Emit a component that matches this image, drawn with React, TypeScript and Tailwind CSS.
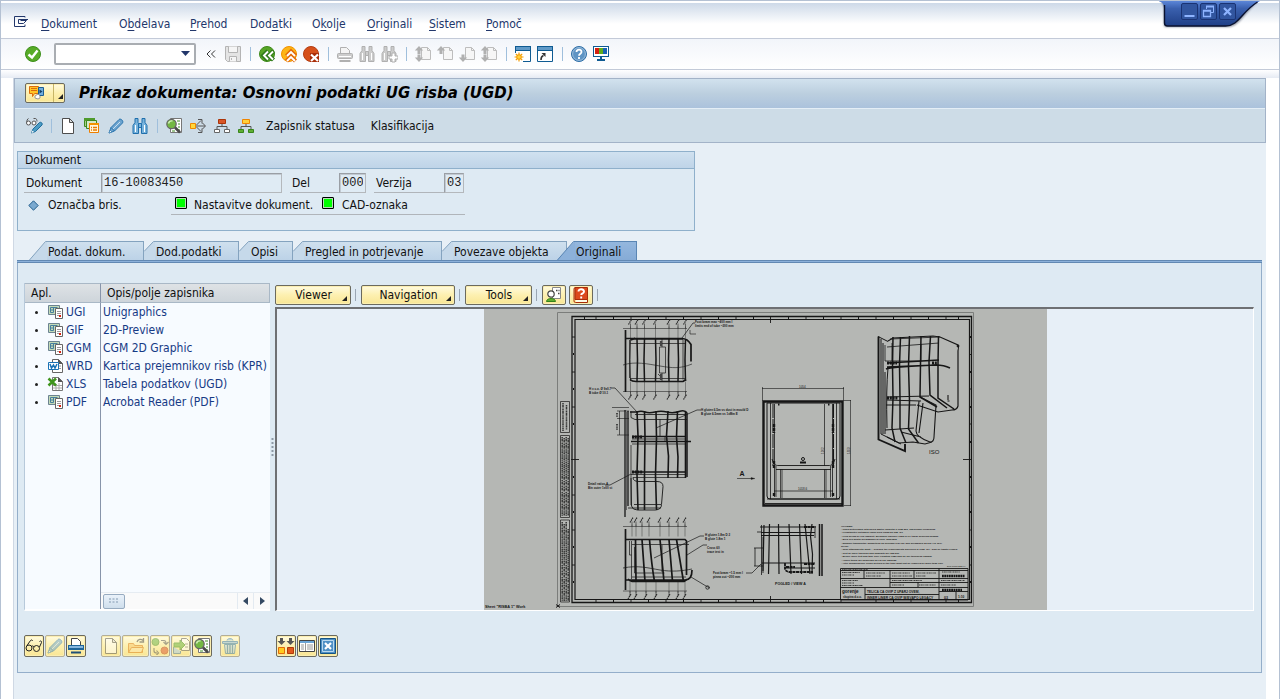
import React from "react";

type IconProps = { children: React.ReactNode; w?: number; h?: number; faded?: boolean };

function Icon({ children, w = 18, h = 18, faded = false }: IconProps) {
  return (
    <svg
      width={w}
      height={h}
      viewBox={`0 0 ${w} ${h}`}
      fill="none"
      aria-hidden="true"
      className={faded ? "shrink-0 opacity-50" : "shrink-0"}
    >
      {children}
    </svg>
  );
}

/* ---------- icons ---------- */

const CheckIcon = () => (
  <Icon>
    <circle cx="9" cy="9" r="7.5" fill="#57ab27" stroke="#3d8f1b" />
    <path d="M4.5 9.5 8 12.5 13.5 5.5" stroke="#fff" strokeWidth="2.4" />
  </Icon>
);

const SaveIcon = () => (
  <Icon>
    <path d="M1.5 1.5h15v15h-13l-2-2z" fill="#e4e4e4" stroke="#b4b4b4" />
    <path d="M4.5 1.5v6h9v-6" fill="#f5f5f5" stroke="#b4b4b4" />
    <path d="M5.500 16.500v-5h7v5" fill="#f5f5f5" stroke="#b4b4b4" />
    <path d="M7.500 13v2" stroke="#b4b4b4" />
  </Icon>
);

const BackIcon = () => (
  <Icon>
    <circle cx="9" cy="9" r="7.500" fill="#57a526" stroke="#3f8a1b" />
    <path d="M10 6 5.500 10.500 10 15M15.500 6 11 10.500 15.500 15" stroke="#2f7a1b" strokeWidth="4.400" />
    <path d="M10 6.500 6 10.500 10 14.500M15 6.500 11 10.500 15 14.500" stroke="#fff" strokeWidth="1.900" />
  </Icon>
);

const ExitIcon = () => (
  <Icon>
    <circle cx="9" cy="9" r="7.500" fill="#fdb515" stroke="#f29100" />
    <path d="M6.500 11 11 6.500 15.500 11M6.500 16 11 11.500 15.500 16" stroke="#e36a0a" strokeWidth="4.200" />
    <path d="M7 11 11 7 15 11M7 16 11 12 15 16" stroke="#fff" strokeWidth="1.900" />
  </Icon>
);

const CancelIcon = () => (
  <Icon>
    <circle cx="9" cy="9" r="7.500" fill="#d6501a" stroke="#b43c10" />
    <path d="M8 8h9v9H8z" fill="#a92d07" />
    <path d="m9 9.500 7 6.500m0-6.500L9 16" stroke="#fff" strokeWidth="2.200" />
  </Icon>
);

const PrintIcon = () => (
  <Icon>
    <path d="M4.500 8V2.500h6l3 3V8" fill="#f4f4f4" stroke="#b0b0b0" />
    <rect x="1.500" y="8.500" width="15" height="5" rx="1" fill="#ccc" stroke="#b0b0b0" />
    <path d="M3 11.500h12" stroke="#fff" />
    <path d="M3.500 16h11" stroke="#b0b0b0" strokeWidth="2" />
  </Icon>
);

function Binoculars({ fill, stroke }: { fill: string; stroke: string }) {
  return (
    <g fill={fill} stroke={stroke}>
      <path d="M4 1.500h3v4l.5 1v10h-5.500v-8l2-3z" />
      <path d="M11 1.500h3v4l2 3v8h-5.500v-10l.5-1z" />
      <path d="M7.500 6.500h3v4h-3z" />
      <path d="M4.500 8v7M13.500 8v7" stroke="#fff" />
    </g>
  );
}

const FindIcon = () => (
  <Icon>
    <Binoculars fill="#ccc" stroke="#b0b0b0" />
  </Icon>
);

const FindNextIcon = () => (
  <Icon>
    <Binoculars fill="#ccc" stroke="#b0b0b0" />
    <path d="M12 8h3v3h3v3h-3v3h-3v-3H9v-3h3z" fill="#fff" stroke="#b0b0b0" />
  </Icon>
);

function PageNavIcon({ up = false, down = false }: { up?: boolean; down?: boolean }) {
  return (
    <Icon>
      <path d="M7.500 2.500h6l3 3v9h-9z" fill="#f6f6f6" stroke="#bdbdbd" />
      <path d="M13.500 2.500v3h3" stroke="#bdbdbd" />
      {up && <path d="M5 1 .8 5.500H3.500V9h3V5.500h2.700z" fill="#b0b0b0" />}
      {down && <path d="M5 17 .8 12.500H3.500V9.500h3v3h2.700z" fill="#b0b0b0" />}
    </Icon>
  );
}

const NewSessionIcon = () => (
  <Icon>
    <path d="M1.500 1.500h15v15h-15z" fill="#fff" stroke="#0f5b92" />
    <path d="M1 1h16v5H1z" fill="#0f5b92" />
    <path d="M2 2h14v3H2z" fill="#5f9ac8" />
    <path d="M0 8h9v10H0z" fill="#fff" />
    <circle cx="5" cy="12" r="2.800" fill="#fbb212" />
    <path d="M5 7.500v9M.5 12h9M1.800 8.800l6.400 6.400M8.200 8.800l-6.400 6.400" stroke="#f39a00" strokeWidth="1.200" />
    <circle cx="5" cy="12" r="1.800" fill="#ffd23f" />
  </Icon>
);

const ShortcutIcon = () => (
  <Icon>
    <path d="M1.500 1.500h15v15h-15z" fill="#fff" stroke="#0f5b92" />
    <path d="M1 1h16v5H1z" fill="#0f5b92" />
    <path d="M2 2h14v3H2z" fill="#5f9ac8" />
    <path d="M5 15c0-3 1-4 2.500-4.500" stroke="#333" strokeWidth="1.600" />
    <path d="M5.500 8h4v4z" fill="#333" />
  </Icon>
);

const HelpIcon = () => (
  <Icon>
    <circle cx="9" cy="9" r="7.500" fill="#5e94c4" stroke="#2e6ea6" />
    <circle cx="9" cy="9" r="6.400" stroke="#a9c8e2" strokeWidth=".8" />
    <path d="M6.500 7c0-3.200 5.200-3 5 0 0 1.800-2.500 1.800-2.500 3.800M9 12v2" stroke="#fff" strokeWidth="1.800" />
  </Icon>
);

const MonitorIcon = () => (
  <Icon>
    <path d="M1 1h16v11H1z" fill="#0f5b92" />
    <path d="M2 2h14v9H2z" fill="#fff" />
    <path d="M3 3h4v6H3z" fill="#d3200f" />
    <path d="M7 3h4v6H7z" fill="#5fae1c" />
    <path d="M11 3h4v6h-4z" fill="#1b63b4" />
    <path d="M8 12h2v2h3v2H5v-2h3z" fill="#0f5b92" />
  </Icon>
);

const PencilShape = () => (
  <>
    <path d="M2 16 4 10.500 12 2.500c1.500-1.500 5 1.500 3.500 3.500L7.500 14z" fill="#6da4cf" stroke="#2873ad" />
    <path d="m6 12 7-7" stroke="#c9e0f1" />
    <path d="m4 10.500 3.500 3.500" stroke="#2873ad" />
    <path d="m2 16 1-3 2 2z" fill="#e8f1f8" stroke="#2873ad" strokeWidth=".6" />
  </>
);

const PencilIcon = ({ faded = false }: { faded?: boolean }) => (
  <Icon faded={faded}>
    <PencilShape />
  </Icon>
);

const ToggleEditIcon = () => (
  <Icon>
    <path d="M3.500 1.500c-1 0-2 3-2 4M8.500 1.500h2c1 0 1.500 2 1.500 3" stroke="#555" />
    <circle cx="3.500" cy="6" r="2" fill="#fff" stroke="#555" />
    <circle cx="9" cy="6" r="2" fill="#fff" stroke="#555" />
    <path d="m6.500 16 1.500-4 6.500-6.500c1.500-1 3.500 1 2.500 2.500L10.500 14.500z" fill="#4b9cc4" stroke="#1e6c9c" />
    <path d="m6.500 16 1-2.500 1.500 1.500z" fill="#fff" />
  </Icon>
);

const PageIcon = ({ faded = false }: { faded?: boolean }) => (
  <Icon faded={faded}>
    <path d="M3.500 1.500h7l4 4v11h-11z" fill="#fff" stroke="#4d4d4d" />
    <path d="M10.500 1.500v4h4z" fill="#ddd" stroke="#4d4d4d" />
  </Icon>
);

const CopyIcon = () => (
  <Icon>
    <path d="M1.500 1.500h10v8h-10z" fill="#a8cf8b" stroke="#3e8a1d" />
    <path d="M1 1h11v3H1z" fill="#4f9b2d" />
    <path d="M3.500 3.500h10v8h-10z" fill="#d5e8c8" stroke="#3e8a1d" />
    <path d="M6.500 6.500h9v9h-9z" fill="#fff6dd" stroke="#ee7f00" />
    <path d="M6 6h10v2H6z" fill="#f39200" />
    <path d="M8 10.500h1M10 10.500h4M8 13h1M10 13h4" stroke="#e77a00" strokeWidth="1.300" />
  </Icon>
);

const BlueFindIcon = () => (
  <Icon>
    <Binoculars fill="#78b3dc" stroke="#1f6fac" />
  </Icon>
);

const DetailIcon = () => (
  <Icon>
    <path d="M5.500 1.500h11v14h-11z" fill="#fff" stroke="#777" />
    <path d="M12 4h3M13 7h2M13 10h2M13 13h2M7 14h3" stroke="#3f8c24" />
    <circle cx="6.500" cy="7" r="4.700" fill="#73b843" stroke="#666" strokeWidth="1.200" />
    <path d="M3.500 6.500a3.500 3.500 0 0 1 4-2.500" stroke="#d2edbc" strokeWidth="1.400" />
    <path d="m10 10.500 5 5" stroke="#4a4a4a" strokeWidth="2.600" />
  </Icon>
);

const WhereUsedIcon = () => (
  <Icon>
    <path d="M1.500 6.500h5v5h-5z" fill="#ffd83c" stroke="#f08a00" />
    <path d="M7 9h9M7.500 8l4.500-4.500M7.500 10l4.500 4.500" stroke="#555" />
    <path d="m13.500 6 3 3-3 3M9 2.500h4v4M9 15.500h4v-4" stroke="#555" />
  </Icon>
);

function HierarchyIcon({ top, topLine, bottom, bottomLine }: { top: string; topLine: string; bottom: string; bottomLine: string }) {
  return (
    <Icon>
      <path d="M9 6v4M4 13v-3.500h10V13" stroke="#555" />
      <path d="M5.500 2.500h7v4h-7z" fill={top} stroke={topLine} />
      <path d="M1.500 12.500h5v3h-5zM11.500 12.500h5v3h-5z" fill={bottom} stroke={bottomLine} />
    </Icon>
  );
}

const GlassesIcon = () => (
  <Icon>
    <circle cx="4" cy="11" r="3" stroke="#222" />
    <circle cx="11.500" cy="11.500" r="3" stroke="#222" />
    <path d="M6.500 9.500c1-1 2-.5 2.500.5M2 8.500l3.500-5c1-1 2-.5 2 .5M14.500 10l2-4.500c.5-1.500-1-2-2-1" stroke="#222" />
  </Icon>
);

const BluePrintIcon = () => (
  <Icon>
    <path d="M4.500 8V1.500h6l3 3V8" fill="#fff" stroke="#444" />
    <path d="M1 8h16v5H1z" fill="#1e6599" />
    <path d="M2 9h14v2H2z" fill="#85b6de" />
    <path d="M4 15.500h10" stroke="#1e4f76" strokeWidth="2" />
  </Icon>
);

const FolderIcon = () => (
  <Icon faded w={20}>
    <path d="M2.500 15.500v-9h5l1 2h8v7z" fill="#f9c66a" stroke="#d87811" />
    <path d="m2.500 15.500 3-5h12l-2 5z" fill="#fde3a6" stroke="#d87811" />
    <path d="M11 5c1-3 4-3.500 6-1.500M17.500 1v4h-4" stroke="#444" strokeWidth="1.300" />
  </Icon>
);

const SwapIcon = () => (
  <Icon faded>
    <circle cx="4.500" cy="5" r="3.500" fill="#69b141" stroke="#468b25" />
    <circle cx="13.500" cy="13.500" r="3.500" fill="#db5630" stroke="#b8411d" />
    <path d="M10 3.500h3q2 0 2 3M12.500 5l2.500 2.500L17.500 5M3 11v3q0 2 3 2M5.500 13.500l2 2.500-2 2" stroke="#555" strokeWidth="1.200" />
  </Icon>
);

const CheckInIcon = () => (
  <Icon faded>
    <path d="M9.500 1.500h5l3 3v9h-8z" fill="#fff" stroke="#555" />
    <path d="M1.500 10v6.500h7V14" fill="#a6cbe8" stroke="#44759c" />
    <path d="M2 6h6V3l5 5-5 5v-3H2z" fill="#65b13b" stroke="#3d8c1c" />
    <path d="M13 7h3M13 10h3" stroke="#777" />
  </Icon>
);

const TrashIcon = () => (
  <Icon faded>
    <path d="M6 3.500c0-2.500 6-2.500 6 0M1.500 4.500h15v2h-15z" fill="#8fbbe0" stroke="#2f74aa" />
    <path d="M3.500 7.500h11l-1 9h-9z" fill="#d5e7f5" stroke="#2f74aa" />
    <path d="M6.500 8v8M9 8v8M11.500 8v8" stroke="#2f74aa" strokeWidth="1.400" />
  </Icon>
);

const DownSquaresIcon = () => (
  <Icon>
    <path d="M3 1h3v3h2.500L4.500 8 .5 4H3zM12 1h3v3h2.500L13.500 8l-4-4H12z" fill="#555" />
    <path d="M1.500 10.500h6v6h-6z" fill="#ffcb1f" stroke="#e26a0c" />
    <path d="M10.500 10.500h6v6h-6z" fill="#e0591d" stroke="#b13a08" />
  </Icon>
);

const WindowIcon = () => (
  <Icon>
    <path d="M1.500 3.500h15v11h-15z" fill="#fff" stroke="#444" />
    <path d="M2 4h14v2H2z" fill="#6ba4d6" />
    <path d="M7.500 6v8M9 8h6M9 10h6M9 12h6M3 8h3M3 10h3M3 12h3" stroke="#999" />
  </Icon>
);

const CloseBoxIcon = () => (
  <Icon>
    <path d="M1.500 1.500h15v15h-15z" fill="#4e90c5" stroke="#165483" />
    <path d="M3.500 3.500h11v11h-11z" stroke="#b9d8ee" />
    <path d="m6 6 6 6m0-6-6 6" stroke="#fff" strokeWidth="2.200" />
  </Icon>
);

const CadFileIcon = () => (
  <Icon w={18} h={17}>
    <path d="M1.500 1.500h11v9h-11z" fill="#c4dbb8" stroke="#6b8391" />
    <path d="M3.500 3.500h7M3.500 3.500v5h3v-5M3.500 6h3" stroke="#467f9d" />
    <path d="M8.500 4.500h7v10h-7z" fill="#fff" stroke="#666" />
    <path d="M10 7.500h4M10 9.500h4M10 11.500h2" stroke="#999" />
    <path d="M12 11h2v2h-2z" fill="#d8210f" />
  </Icon>
);

const WordFileIcon = () => (
  <Icon w={18} h={17}>
    <path d="M5.500 1.500h6l4 4v9h-10z" fill="#fff" stroke="#666" />
    <path d="M11 1v5h5z" fill="#555" />
    <path d="M12 8h2M12 10.500h2" stroke="#999" />
    <path d="M1.500 4.500h10v7h-10z" fill="#fff" stroke="#1a72b5" />
    <path d="m3 6 1.500 4L6.500 7 8 10l2-4" stroke="#1a72b5" strokeWidth="1.500" />
  </Icon>
);

const ExcelFileIcon = () => (
  <Icon w={18} h={17}>
    <path d="M5.500 1.500h6l4 4v9h-10z" fill="#fff" stroke="#777" />
    <path d="M11 1v5h5z" fill="#555" />
    <path d="M6 9.500h9M6 12h9M9 8v6M12 7v7" stroke="#aaa" />
    <path d="m1.500 2.500 7.500 7M9 2.500l-7.500 7" stroke="#3f951d" strokeWidth="2.600" />
  </Icon>
);

const UserListIcon = () => (
  <Icon>
    <path d="M7.500 1.500h8v11h-8z" fill="#fff" stroke="#888" />
    <path d="M11 4.500h1.500M13.500 4.500h1M13 7.500h1.500" stroke="#444" strokeWidth="1.500" />
    <circle cx="6" cy="8" r="3.200" fill="#fff" stroke="#444" strokeWidth="1.200" />
    <path d="M1.500 15.500c0-4 9-4 9 0z" fill="#5fae2e" stroke="#33811a" />
  </Icon>
);

const HelpBookIcon = () => (
  <Icon>
    <path d="M3 1.500h12.500v12H3z" fill="#dc4a1c" stroke="#a82c08" />
    <path d="M3 13.500h12.500v3H3.500q-1.500 0-1.500-1.500V3q0-1.500 1.500-1.500" stroke="#a82c08" />
    <path d="M4 15h11" stroke="#fff" strokeWidth="1.500" />
    <path d="M6.500 5.500c0-3 5.500-3 5.500.2 0 1.800-2.800 1.600-2.800 3.300M9.200 10.500v2" stroke="#fff" strokeWidth="1.900" />
  </Icon>
);

const MenuIcon = () => (
  <Icon w={16} h={14}>
    <path d="M11 2.500V1.500H.5v10H11v-2" stroke="#22376b" />
    <path d="M4.500 4.500h9.500M4.500 4.500v4h5l3-3h-6" stroke="#22376b" />
  </Icon>
);

const ServiceIcon = () => (
  <Icon w={20} h={18}>
    <path d="M2.500 2.500h9v7h-4l-2 3v-3h-3z" fill="#ffc528" stroke="#dd6c0a" />
    <path d="M4 4.500h6M4 6.500h6" stroke="#dd6c0a" />
    <path d="M11.500 3.500h5v8h-5z" fill="#72aede" stroke="#1e5e91" />
    <path d="m12.500 5.500 3 2-3 2z" fill="#153f66" />
    <path d="m8 12 3-2 2 2v2l-2 1-3-1z" fill="#fff" stroke="#999" />
  </Icon>
);

/* ---------- shared controls ---------- */

function ToolButton({ label, children, wide = false }: { label: string; children: React.ReactNode; wide?: boolean }) {
  return (
    <button
      type="button"
      aria-label={label}
      title={label}
      className={`flex h-6 shrink-0 items-center justify-center ${wide ? "w-6" : "w-[22px]"}`}
    >
      {children}
    </button>
  );
}

function Separator({ wide = false }: { wide?: boolean }) {
  return (
    <span className={`flex shrink-0 justify-center ${wide ? "w-3" : "w-[10px]"}`}>
      <span className="h-[14px] w-px bg-[#9fbfdc]" />
    </span>
  );
}

const raisedBase =
  "rounded-[2px] border bg-linear-to-b from-[#fffbe0] via-[#fdf0b0] to-[#f9e694] shadow-[inset_0_0_0_1px_#fbeeb0]";
const raised = `${raisedBase} border-[#6b6a5e]`;
const raisedOff = `${raisedBase} border-[#b3ae98]`;

function SquareButton({ label, children, disabled = false, wide = false }: { label: string; children: React.ReactNode; disabled?: boolean; wide?: boolean }) {
  return (
    <button
      type="button"
      aria-label={label}
      title={label}
      disabled={disabled}
      className={`flex h-[22px] shrink-0 items-center justify-center ${disabled ? raisedOff : raised} ${wide ? "w-[27px]" : "w-5"}`}
    >
      {children}
    </button>
  );
}

function MenuButton({ children, width }: { children: React.ReactNode; width: string }) {
  return (
    <button type="button" className={`flex h-5 items-center justify-center pl-[9px] ${width} ${raised}`}>
      <span className="flex-1 text-center">{children}</span>
      <svg width="5" height="5" viewBox="0 0 5 5" className="mr-[3px] mb-[3px] self-end" aria-hidden="true">
        <path d="M5 0v5H0z" fill="#222" />
      </svg>
    </button>
  );
}

function Bar() {
  return <span className="mx-[4px] h-3 w-px bg-[#9aa6b4]" />;
}

/* ---------- menu ---------- */

const menus: [string, string, string, string][] = [
  ["", "D", "okument", "w-[78px]"],
  ["O", "b", "delava", "w-[71px]"],
  ["", "P", "rehod", "w-[60px]"],
  ["Dod", "a", "tki", "w-[62px]"],
  ["O", "k", "olje", "w-[55px]"],
  ["", "O", "riginali", "w-[62px]"],
  ["", "S", "istem", "w-[57px]"],
  ["", "P", "omoč", "w-[50px]"],
];

/* ---------- tabs ---------- */

const tabs: { label: string; width: string; first?: boolean; active?: boolean }[] = [
  { label: "Podat. dokum.", width: "w-[115px]", first: true },
  { label: "Dod.podatki", width: "w-[95px]" },
  { label: "Opisi", width: "w-[54px]" },
  { label: "Pregled in potrjevanje", width: "w-[149px]" },
  { label: "Povezave objekta", width: "w-[125px]" },
  { label: "Originali", width: "w-20", active: true },
];

function Tab({ label, width, first = false, active = false }: { label: string; width: string; first?: boolean; active?: boolean }) {
  const slant = first || active;
  const line = active ? "#5a86b4" : "#84a3bf";
  return (
    <button type="button" role="tab" aria-selected={active} className={`flex h-[19px] shrink-0 ${width} ${active ? "-ml-[10px]" : ""}`}>
      {slant ? (
        <svg width="18" height="19" viewBox="0 0 18 19" className="shrink-0" aria-hidden="true">
          <path d="M0 19 17 .5h1V19z" fill={active ? "#8cb1da" : "#c6d9ea"} />
          <path d="M.5 19 16.500.5H18" fill="none" stroke={line} />
        </svg>
      ) : (
        <svg width="11" height="19" viewBox="0 0 11 19" className="shrink-0" aria-hidden="true">
          <path d="M0 10.500 9.500.5H11V19H0z" fill="#c6d9ea" />
          <path d="M0 10.500 9.500.5H11" fill="none" stroke={line} />
        </svg>
      )}
      <span
        className={`flex h-[19px] flex-1 items-center border-t border-r pt-px pl-px whitespace-nowrap ${
          active
            ? "border-[#5a86b4] bg-linear-to-b from-[#94b7de] to-[#86abd6]"
            : "border-[#84a3bf] bg-linear-to-b from-[#cfe0ee] to-[#bcd2e7]"
        }`}
      >
        {label}
      </span>
    </button>
  );
}

/* ---------- originals table ---------- */

const originals = [
  { app: "UGI", text: "Unigraphics", icon: <CadFileIcon /> },
  { app: "GIF", text: "2D-Preview", icon: <CadFileIcon /> },
  { app: "CGM", text: "CGM 2D Graphic", icon: <CadFileIcon /> },
  { app: "WRD", text: "Kartica prejemnikov risb (KPR)", icon: <WordFileIcon /> },
  { app: "XLS", text: "Tabela podatkov (UGD)", icon: <ExcelFileIcon /> },
  { app: "PDF", text: "Acrobat Reader (PDF)", icon: <CadFileIcon /> },
];

function Originals() {
  return (
    <div className="flex w-[246px] shrink-0 flex-col border-b-2 border-l border-b-white border-l-[#b7c9da] bg-[#f7fbff]">
      <table className="w-full table-fixed border-separate border-spacing-0">
        <thead>
          <tr className="h-5 bg-linear-to-b from-[#dfe3e6] to-[#cdd4da] text-left">
            <th className="w-[76px] border-y border-r border-y-[#a9b8c6] border-r-[#8794aa] p-0 pl-[6px] font-normal">Apl.</th>
            <th className="border-y border-r border-[#a9b8c6] p-0 pl-[6px] font-normal">Opis/polje zapisnika</th>
          </tr>
        </thead>
        <tbody className="text-[#163a85]">
          {originals.map((o) => (
            <tr key={o.app} className="h-[18px]">
              <td className="border-r border-[#8794aa] p-0">
                <span className="flex h-[18px] items-center">
                  <span className="ml-[10px] size-[3px] shrink-0 rounded-full bg-[#222]" />
                  <span className="mr-px ml-[9px]">{o.icon}</span>
                  <span className="whitespace-nowrap">{o.app}</span>
                </span>
              </td>
              <td className="p-0 pl-[2px] whitespace-nowrap">{o.text}</td>
            </tr>
          ))}
        </tbody>
      </table>
      <div className="flex flex-1 items-end">
        <div className="h-full w-[76px] shrink-0 border-r border-[#8794aa]" />
        <div className="flex h-[17px] flex-1 items-center border-t border-[#e6ecf2] bg-[#fafafa] pl-[2px]">
          <div className="grid h-[15px] w-[22px] place-items-center rounded-[2px] border border-[#97abc0] bg-linear-to-b from-[#eaf2fa] to-[#cfdeec]">
            <svg width="10" height="6" viewBox="0 0 10 6" aria-hidden="true">
              <path d="M0 1h9M0 4h9" stroke="#8299b0" strokeDasharray="2 1.500" />
            </svg>
          </div>
          <div className="flex-1" />
          <button type="button" aria-label="Levo" className="grid h-4 w-4 place-items-center border-l border-[#e3eaf1]">
            <svg width="5" height="8" viewBox="0 0 5 8" aria-hidden="true"><path d="M5 0v8L0 4z" fill="#354a63" /></svg>
          </button>
          <button type="button" aria-label="Desno" className="grid h-4 w-[17px] place-items-center border-l border-[#e3eaf1]">
            <svg width="5" height="8" viewBox="0 0 5 8" aria-hidden="true"><path d="M0 0v8l5-4z" fill="#354a63" /></svg>
          </button>
        </div>
      </div>
    </div>
  );
}

/* ---------- technical drawing ---------- */

const ribs = [629.5, 636, 643.5, 654.5, 668, 677, 684.5];

function DimensionRow({ y, dir, xs }: { y: number; dir: 1 | -1; xs: number[] }) {
  return (
    <g stroke="#2a2a2a" strokeWidth=".6">
      <path d={`M622 ${y}H686`} />
      {xs.map((x) => (
        <g key={x}>
          <path d={`M${x} ${y + 2 * dir}V${y - 10 * dir}`} opacity=".7" />
          <path d={`M${x - 2} ${y + 6 * dir + 2}l3 -5`} strokeWidth="1.200" strokeDasharray="1.500 .6" />
          <path d={`M${x} ${y}V${y + 5 * dir}`} />
        </g>
      ))}
    </g>
  );
}

const notes = [
  "OPOMBE:",
  "- Cona pritrjevanja lista poleg zahtev podjetja s 1125 500, vzporedno veljavnjem",
  "- Predstavitev notranjih robov brez vlaga po 025 401",
  "- Pred delom se ves nasprot. Brezhibni Taljenec 1025 in K1 tiskar debelina 600mm",
  "- Bled ves mesto premazana PE folije 150x1500",
  "- Zunanje transportne dobavitelja po prejemu rezr vse dno premajsen za ses Als 10%.",
  "NOTE:",
  "- Tube attachments must ... besides the requirements specified in 1125 401 - also be tightly closed",
  "- Test all inner tidyness and humidity per 025 201",
  "- Before inner test and take over Foliation 1080 and for foil thickness 150mm",
  "- Above tubes are underlaid on PE foil 150x150",
  "- After submergence cross-section of the tube must not be reduced by more than 10%",
];

function Drawing() {
  return (
    <svg
      viewBox="483 309 563 301"
      width="563"
      height="301"
      role="img"
      aria-label="UG risba"
      className="block shrink-0 bg-[#b5b7b4]"
      fontFamily="'Liberation Sans', sans-serif"
      fill="none"
      stroke="#161616"
    >
      {/* sheet frame */}
      <path d="M556.500 312.500h416v294h-416z" stroke="#7b7d7b" />
      <path d="M571 316.500h399.500v286H571z" strokeWidth="1.300" />
      <path d="M574 319.500h394.500v280H574z" strokeWidth="1.200" />
      <path
        d="M595 316v3M630 316v3M665 316v3M700 316v3M735 316v3M769.500 316v7M805 316v3M840 316v3M875 316v3M910 316v3M945 316v3M595 600v3M630 600v3M665 600v3M700 600v3M735 600v3M769.500 596v7M805 600v3M840 600v3M875 600v3M910 600v3M945 600v3M571 337h3M571 372h3M571 407h3M570 459.500h8M571 495h3M571 530h3M571 565h3M968 354.500h3M968 389h3M968 424h3M962 459.500h9M968 495h3M968 530h3M968 565h3"
        strokeWidth=".9"
      />
      <path
        d="M583 318h1M612 318h1M647 318h1M682 318h1M717 318h1M752 318h1M787 318h1M822 318h1M857 318h1M892 318h1M927 318h1M957 318h1M612 601h1M647 601h1M682 601h1M717 601h1M752 601h1M787 601h1M822 601h1M892 601h1M927 601h1M957 601h1M572 354h1M572 389h1M572 424h1M572 477h1M572 512h1M572 547h1M572 582h1M969 337h1M969 372h1M969 407h1M969 442h1M969 477h1M969 512h1M969 547h1M969 582h1"
        strokeWidth="2"
      />
      <path d="m555 604.500 4 3m0-3-4 3" />

      {/* margin text blocks */}
      <path d="M559.500 401.500h9v31h-9zM559.500 435.500h9v82h-9zM559.500 520h9v82h-9z" strokeWidth=".7" />
      <g strokeWidth="1.500" strokeDasharray="1.500 .5 2.300 .4 .8 .6" opacity=".8">
        <path d="M562 403v28M565.500 405v25" />
        <path d="M561.200 437v79M563.200 438v78M565.200 437v79M567.200 438v78" />
        <path d="M561.200 522v79M563.200 524v77M565.200 522v79M567.200 529v72" />
      </g>

      {/* upper view */}
      <DimensionRow y={328.5} dir={-1} xs={ribs} />
      <DimensionRow y={391.5} dir={1} xs={ribs} />
      <path d="M624.500 330v62" strokeWidth="1.700" />
      <path d="M624 338.500h57q5.500 0 9 6v17M630 340l4-2M629 379.500q2 2 6 2h47l3-2" strokeWidth="1.700" />
      <path d="M628.500 340v38M629 343.500h56M629 378.500h56M632 339.500h50v40M658.500 347h6v26h-6zM661 338v9M661 373v8M657 374l4 4" strokeWidth=".7" />
      <path d="M660 341v5M660 374v6" strokeWidth="2.200" stroke="#444" />
      <path d="M622 365c12-4 25-1 37 1s20 3 32-2M689 330v4h6" strokeWidth=".6" />
      {ribs.map((x, i) => (
        <path key={x} d={`M${x} 339q${i % 2 ? 1 : -1} 20 0 42`} strokeWidth={i === 0 ? 0.8 : 1.5} />
      ))}

      {/* middle view */}
      <path d="M624 410v107M627 411v95" strokeWidth="1.300" />
      <path d="M625.500 412v98" stroke="#666" />
      <path d="M629 412h7q4-1.500 8 0t10 0 12 0 12-.5 8 1.500v64" strokeWidth="1.500" />
      <path d="M630 411.500v6l4 2h52M634 414.500h50M659 419v18" strokeWidth=".8" />
      <path d="M631 436.500h54M630 441.500h60M631 472h54" strokeWidth="1.700" />
      <path d="M631 439h54M631 444h54M630 474.500h55M632 477.500h52M630 445v60M664 437v5" strokeWidth=".7" />
      <path d="M631 437h10M631 472h11" strokeWidth="3" strokeDasharray="2 .7" />
      <path d="M632 477.500q0 4 6 4h18q6 0 6 5l-1.500 18q0 5-6 5.500h-18q-5 0-6-4l-.5-28" strokeWidth=".9" />
      <path d="M627 508h33M633 504.500h27" strokeWidth=".8" />
      <path d="M636 411l1 25-1 38 1 36M643.500 411l.5 26-.5 37v36M655 411l.5 27-1 37 1 35M667 411l-1.500 25 2 20-.5 22M676.500 411l-1 26 1.500 20-.5 21M684.500 411v67" strokeWidth="1.600" />
      <path d="M618.500 411v24M616 411h12M616 418.500h12M616 435h12M611 407.500h17" strokeWidth=".6" />
      <path d="M616 413v4M616 424v6" strokeWidth="1.400" strokeDasharray="1 .6" />

      {/* lower view */}
      <DimensionRow y={526.5} dir={-1} xs={[631, 635, 641, 648, 659, 668, 677, 684]} />
      <DimensionRow y={591} dir={1} xs={[629, 635, 645, 655, 668, 677, 684]} />
      <path d="M624.500 529v61" strokeWidth="1.700" />
      <path d="M624 539.500h60l1.500 1.500v34M624 580h60q7 0 7-10M627 579q2 2.500 6 2.500h50l3-2" strokeWidth="1.700" />
      <path d="M631 544.500h57M628.500 541v14h2M630.500 541v38M633.500 547v26h30M661 545v27M631 577h54" strokeWidth=".7" />
      <path d="M622 568c15-3 25 0 37 2s22 1 32-1" strokeWidth=".7" />
      <path d="M634.500 539.500l.5 42M641 539.500l3 42M648.500 539.500q2 25 5 42M659 539.500l4 42M668 539.500l3.500 42M675.500 539.500l7 42" strokeWidth="1.700" />

      {/* leaders and callouts */}
      <path
        d="M681 338l11-15h2M636 412l-22-24h-4M655 428l41-18h4M630 474l-21 11h-5M653 558l46-22h4M686 555l16-10h4M690 577l15 9 4 2M745 573h6l9-9"
        strokeWidth=".7"
      />
      <circle cx="706.500" cy="587.500" r="1.700" strokeWidth=".8" />
      <g stroke="none" fill="#161616" fontSize="3" fontWeight="bold">
        <text x="694" y="323">Foot beam max ~400 mm I</text>
        <text x="694" y="327">limits end of tube ~200 mm</text>
        <text x="588" y="390">H = c.o. Ø 9x0.7</text>
        <text x="588" y="394">B tube Ø 10.1</text>
        <text x="700" y="411">H gluten 6.5m vs dust in mould D</text>
        <text x="700" y="415">B glute 6.5mm vs 1xMm E</text>
        <text x="587" y="485">Detail ratios A</text>
        <text x="587" y="489">Bin outer 1x00 st</text>
        <text x="704" y="536">H gluten 1.8m D 2</text>
        <text x="704" y="540">B glute 1.8m 1</text>
        <text x="706" y="549">Cross 60</text>
        <text x="706" y="553">trace test in</text>
        <text x="712" y="574">Foot beam ~1.5 mm I</text>
        <text x="712" y="578">pinna out ~200 mm</text>
        <text x="798" y="387.500" fontWeight="normal">1054</text>
        <text x="797" y="490" fontWeight="normal">1018.6</text>
        <text transform="translate(848.500 454) rotate(-90)" fontWeight="normal">1353</text>
        <text transform="translate(822.500 454) rotate(-90)" fontWeight="normal">1262</text>
        <text x="774" y="584.500" fontSize="3.600">POGLED / VIEW A</text>
        <text x="928" y="454" fontSize="6" fontWeight="normal">ISO</text>
        <text x="738.500" y="475.500" fontSize="7">A</text>
        <text x="484" y="608" fontSize="3.800">Sheet "RISBA 1" Work</text>
      </g>
      <path d="M736 478.500h15" strokeWidth=".6" />
      <path d="m750 477.500 4 1-4 1z" fill="#161616" strokeWidth=".3" />

      {/* front view */}
      <path d="M762.500 401.500h79v104h-79z" strokeWidth="2.400" />
      <path d="M766 403h73v93q0 3-3 3h-67q-3 0-3-3z" strokeWidth="1" />
      <path d="M769.500 403v96M835.500 403v96M773.500 404v93M831.500 404v93" strokeWidth=".8" />
      <path d="M772 404v62M832.500 404v62" strokeWidth="1" strokeDasharray="14 1" />
      <path d="M773 424v9M773 461v8M832 424v9M832 461v8M773 493v4M832 493v4" strokeWidth="2.400" strokeDasharray="3 1" />
      <path d="M771 459c2 6 4 6.500 6 6.500h51c2 0 4-.5 6-6.500M775 469.500h55M766 499h73M764 503.500h77" strokeWidth=".9" />
      <path d="M775 466v31M779.500 469v29M781 469v29M823.500 469v29M825 469v29M829.500 466v31M823.500 404v62M773 491h59" strokeWidth=".7" />
      <circle cx="802" cy="459" r="1.500" strokeWidth="1" />
      <path d="M799 462.500h6M777 404.500h1.500M827 404.500h1.500" strokeWidth="1.800" />
      <path d="M761.500 401v-14M842.500 401v-14M761 388.500h82M843 400.500h7M843 505.500h7M849.500 400v106" strokeWidth=".6" />

      {/* view A */}
      <path d="M759 527h56M760 532.500h54M760 535.500h53M761 563h53M783 568h31" strokeWidth="1.200" />
      <path d="M760.500 525v50M762 537v36M814 526v12M756 532h4M754 548v18M753 548h9M753 566h9" strokeWidth=".8" />
      <path d="M818.500 524v52M821 524v52" strokeWidth="1.500" />
      <path d="M763 525l-1 46M768.500 524l-1 50M777.500 524l.5 50M788 524l2 50M798.500 524l2 50M804 524l5 50M811 524l-1.500 12 2 18-.5 20" strokeWidth="1.200" />
      <path d="M784 563v5q0 4 6 4h22M803 527h10M803 564h11M785 567h9" strokeWidth="1.800" strokeDasharray="3 .6" />

      {/* isometric view */}
      <path d="M877.500 336.500v103l26.500 11.500v-7" strokeWidth="1.900" />
      <path d="M877 336.500l10 5M880 339v95l20 10M882 343v91" strokeWidth="1" />
      <path d="M887 341l5-3 40-2 7 1 18 8q1 2 0 6v55q-1 4-6 4l-14 2-21-7" strokeWidth="1.200" />
      <path d="M884 345v16h36v-17M889 339l50-2M886 347l52-4M891 361v-18" strokeWidth=".8" />
      <path d="M886 363l52-3M886 367l50-2M885 369q4-2 50-4 8 0 14 3" strokeWidth="1.500" />
      <path d="M884 372v62M887 368q-2 20-1 60M886 397l42-1M886 400l34 1M885 405h30" strokeWidth="1" />
      <path d="M886 363h10M886 398h11M931 363h5" strokeWidth="3" strokeDasharray="2 .8" />
      <path d="M892 337l-.5 28 .5 33-1 30 3 14M899.500 337l-1 28 .5 33 0 30 6 15M908.500 336l-1 30 1 35-1 28 10 14M920 336l-.5 28-.5 33 17 10M929.500 336l-1.500 26 1 33 17 13M937.500 336l-.5 27 0 35 16 11" strokeWidth="1.500" />
      <path d="M918 401l-3 30q0 6 14 11 4 0 4-5l2-32-16-8M884 430l29-2M886 437l12 6 14-1 12 2 7-2M900 432l20 5" strokeWidth="1.100" />
      <path d="M922 403l-4 30M947 395v5M946.500 401h2" strokeWidth="1.100" />
      <circle cx="957" cy="346" r="1" fill="#161616" />

      {/* notes */}
      <g stroke="none" fill="#161616" fontSize="2.500" fontWeight="bold">
        {notes.map((n, i) => (
          <text key={n} x="840" y={526.5 + i * 3.4}>{n}</text>
        ))}
        <text x="946" y="567" fontWeight="normal">DIN 8015 E2044</text>
      </g>

      {/* title block */}
      <path d="M839.500 568.500H967V600H839.500zM839.500 570.500H967M839.500 578.500H967M839.500 587.500H967M864 587.500V600M864 594.500h74M938 568v32M938 591.500h29M863 570v8.500M889 570v17M913 570v8M917 582v5M889 582.500h78M955 592v8" strokeWidth=".9" />
      <g stroke="#222" strokeWidth="1.100" strokeDasharray="1.200 .5 2 .6 .7 .5" opacity=".8">
        <path d="M841 572.500h18M841 575h12M865 573h19M865 576h15M891 573h18M891 576h20M915 573h20M915 576h10M841 580.500h16M841 583h12M841 585.500h21M891 580.500h30M891 585h12M918 585h17M940 580.500h24M940 585h15M941 572h18" />
        <path d="M841 569.700h26" />
      </g>
      <path d="M941 576h23M941 590h20" strokeWidth="2.400" strokeDasharray="1.800 .5" />
      <g stroke="none" fill="#161616" fontWeight="bold">
        <text x="841" y="593" fontSize="4.600">gorenje</text>
        <text x="842" y="597.500" fontSize="2.800">skupina d.o.o.</text>
        <text x="866" y="592.500" fontSize="3.300">TELICA CA OVIP Z UPARJ OVEM,</text>
        <text x="866" y="598.500" fontSize="3.300">INNER LINER CA OVIP W/EVAPO LEGACY</text>
        <text x="943" y="598.500" fontSize="3.600">03</text>
        <text x="957" y="598" fontSize="3.200">1:10</text>
      </g>
    </svg>
  );
}

/* ---------- window controls ---------- */

function WindowControls() {
  const box = "grid size-[17px] place-items-center rounded-[2px] border border-[#1a3373] bg-[#31559f]";
  return (
    <div className="absolute top-0 right-[18px] h-7 w-[102px]">
      <svg width="102" height="28" viewBox="0 0 102 28" className="absolute inset-0" aria-hidden="true">
        <defs>
          <linearGradient id="corner" x1="0" y1="0" x2="0" y2="1">
            <stop offset="0" stopColor="#5b86d8" />
            <stop offset=".3" stopColor="#3a60ae" />
            <stop offset="1" stopColor="#1f3f86" />
          </linearGradient>
          <filter id="soft"><feGaussianBlur stdDeviation="1.200" /></filter>
        </defs>
        <path d="M2 1q3 2 3 6v17q0 2 3 2h60c12 0 14-10 30-25z" fill="#111a33" opacity=".5" filter="url(#soft)" />
        <path d="M-1 0q6 1 6 7v15q0 3 3 3h58c13 0 16-14 35-25z" fill="url(#corner)" />
        <path d="M5.500 4v18q0 3 3 3h58c13 0 16-14 32-24" fill="none" stroke="#0a1230" strokeWidth="1.400" />
      </svg>
      <div className="relative flex gap-[2px] pt-[2px] pl-[22px]">
        <button type="button" aria-label="Pomanjšaj" className={box}>
          <Icon w={13} h={13}><path d="M1.500 11h10" stroke="#8fb4ff" strokeWidth="2" /></Icon>
        </button>
        <button type="button" aria-label="Obnovi" className={box}>
          <Icon w={13} h={13}>
            <path d="M4.500 4V1.500h7v6H9" stroke="#8fb4ff" />
            <path d="M4 1.500h8" stroke="#8fb4ff" strokeWidth="2" />
            <path d="M1.500 5.500h7v6h-7zM1 6h8" stroke="#8fb4ff" strokeWidth="1.300" />
          </Icon>
        </button>
        <button type="button" aria-label="Zapri" className={box}>
          <Icon w={13} h={13}><path d="m3 3 7 7m0-7-7 7" stroke="#8fb4ff" strokeWidth="2.200" /></Icon>
        </button>
      </div>
    </div>
  );
}

/* ---------- form ---------- */

const field =
  "h-5 border border-[#9a9fa5] border-r-[#b4b8bc] border-b-[#b4b8bc] bg-[#dfebf4] px-[2px] font-['Liberation_Mono',monospace] text-[12px] text-[#222] shadow-[inset_1px_1px_0_#c2cad2] outline-none";
const fieldLabel = "flex h-5 items-center border-b border-[#b0b5ba] pl-[2px]";
const tick =
  "size-3 shrink-0 appearance-none rounded-[1px] border border-black bg-[#00ff00] shadow-[inset_0_0_0_1px_#b9dcb9]";

function DocumentForm() {
  return (
    <section className="flex h-20 w-[678px] flex-col border border-[#8fb0cb] bg-[#deeaf3]">
      <h2 className="h-[17px] border-b border-[#8fb0cb] bg-linear-to-b from-[#d0e1f0] to-[#bfd4e8] pl-[7px] leading-4">Dokument</h2>
      <div className="flex pt-1 pl-[6px]">
        <label htmlFor="doc" className={`${fieldLabel} w-[77px]`}>Dokument</label>
        <input id="doc" readOnly defaultValue="16-10083450" className={`${field} w-[181px]`} />
        <label htmlFor="part" className={`${fieldLabel} ml-2 w-[49px]`}>Del</label>
        <input id="part" readOnly defaultValue="000" className={`${field} w-[27px]`} />
        <label htmlFor="version" className={`${fieldLabel} ml-2 w-[70px]`}>Verzija</label>
        <input id="version" readOnly defaultValue="03" className={`${field} w-5`} />
      </div>
      <div className="flex h-[22px] pt-[2px] pl-[10px]">
        <span className="flex w-[143px] items-center gap-[9px]">
          <Icon w={11} h={11}><path d="m5.500.8 4.700 4.700-4.700 4.700L.8 5.500z" fill="#7aa9cf" stroke="#235f8c" /></Icon>
          Označba bris.
        </span>
        <span className="flex w-[294px] border-b border-[#b0b5ba] pl-1 whitespace-nowrap">
          <label className="flex w-[147px] items-center gap-[7px]">
            <input type="checkbox" defaultChecked className={`${tick} -mt-[3px]`} />
            Nastavitve dokument.
          </label>
          <label className="flex items-center gap-2">
            <input type="checkbox" defaultChecked className={`${tick} -mt-[3px]`} />
            CAD-oznaka
          </label>
        </span>
      </div>
    </section>
  );
}

/* ---------- page ---------- */

export default function App() {
  return (
    <div className="relative flex min-h-screen flex-col border-x border-t border-[#b4c1d3] bg-white font-['DejaVu_Sans_Condensed','DejaVu_Sans',sans-serif] text-[12px] leading-4 font-normal text-[#111]">
      <nav className="mt-[2px] flex h-9 shrink-0 items-center border-b border-[#c3cad8] bg-linear-to-b from-[#cdd9e8] to-white to-60% pt-[6px] pl-[13px] text-[#22376b]">
        <button type="button" aria-label="Meni" className="mb-1 w-[27px]"><MenuIcon /></button>
        {menus.map(([a, b, c, w]) => (
          <button key={a + b + c} type="button" className={`${w} text-left`}>
            {a}<span className="underline underline-offset-2">{b}</span>{c}
          </button>
        ))}
      </nav>
      <WindowControls />

      <div className="flex h-[31px] shrink-0 items-center border-b border-[#c3cad8] bg-linear-to-b from-[#f2f5fa] to-white pb-px pl-[21px]">
        <ToolButton label="Potrdi"><CheckIcon /></ToolButton>
        <div className="relative mr-1 ml-[10px] flex w-[142px] items-center">
          <input aria-label="Ukaz" className="h-[22px] w-full rounded-[2px] border-2 border-[#a9adb2] bg-white px-1 outline-none" />
          <svg width="9" height="5" viewBox="0 0 9 5" className="pointer-events-none absolute right-[6px]" aria-hidden="true">
            <path d="M0 0h9L4.500 5z" fill="#22376b" />
          </svg>
        </div>
        <ToolButton label="Skrij"><Icon w={10} h={8}><path d="M4.500.5 1 4l3.500 3.500M9 .5 5.500 4 9 7.500" stroke="#333" /></Icon></ToolButton>
        <ToolButton label="Shrani"><SaveIcon /></ToolButton>
        <Separator wide />
        <ToolButton label="Nazaj"><BackIcon /></ToolButton>
        <ToolButton label="Izhod"><ExitIcon /></ToolButton>
        <ToolButton label="Prekini"><CancelIcon /></ToolButton>
        <Separator wide />
        <ToolButton label="Natisni"><PrintIcon /></ToolButton>
        <ToolButton label="Najdi"><FindIcon /></ToolButton>
        <ToolButton label="Najdi naprej"><FindNextIcon /></ToolButton>
        <Separator wide />
        <ToolButton label="Prva stran"><PageNavIcon up down /></ToolButton>
        <ToolButton label="Prejšnja stran"><PageNavIcon up /></ToolButton>
        <ToolButton label="Naslednja stran"><PageNavIcon down /></ToolButton>
        <ToolButton label="Zadnja stran"><PageNavIcon up down /></ToolButton>
        <Separator wide />
        <ToolButton label="Nova seja"><NewSessionIcon /></ToolButton>
        <ToolButton label="Bližnjica"><ShortcutIcon /></ToolButton>
        <Separator wide />
        <ToolButton label="Pomoč"><HelpIcon /></ToolButton>
        <ToolButton label="Prilagodi"><MonitorIcon /></ToolButton>
      </div>

      <div className="h-2 shrink-0 bg-linear-to-b from-white to-[#e6ebf3]" />

      <main className="mr-[13px] ml-3 flex flex-1 flex-col border-l border-[#cfd8e4] bg-[#e7eff6]">
        <header className="border border-[#a3b3c8] bg-[#cddce7]">
          <div className="flex h-[30px] items-center border-b border-[#e4eef6] bg-linear-to-b from-[#d2e2ee] via-[#bccfdf] to-[#abc2dc] pb-[2px] pl-[10px]">
            <button type="button" aria-label="Storitve" className={`flex h-5 w-10 items-center ${raised}`}>
              <span className="flex h-full w-7 items-center border-r border-[#c7b566] pl-px"><ServiceIcon /></span>
              <svg width="5" height="5" viewBox="0 0 5 5" className="mb-[3px] ml-1 self-end" aria-hidden="true"><path d="M5 0v5H0z" fill="#222" /></svg>
            </button>
            <h1 className="ml-[14px] font-['DejaVu_Sans',sans-serif] text-[15px] leading-6 font-bold text-black italic">Prikaz dokumenta: Osnovni podatki UG risba (UGD)</h1>
          </div>
          <div className="flex h-[33px] items-center pl-[7px]">
            <ToolButton wide label="Prikaz/spremembe"><ToggleEditIcon /></ToolButton>
            <Separator />
            <ToolButton wide label="Novo"><PageIcon /></ToolButton>
            <ToolButton wide label="Kopiraj"><CopyIcon /></ToolButton>
            <ToolButton wide label="Uredi"><PencilIcon /></ToolButton>
            <ToolButton wide label="Iskanje"><BlueFindIcon /></ToolButton>
            <Separator />
            <ToolButton wide label="Podrobno"><DetailIcon /></ToolButton>
            <ToolButton wide label="Uporaba"><WhereUsedIcon /></ToolButton>
            <ToolButton wide label="Hierarhija navzgor"><HierarchyIcon top="#d95628" topLine="#ab3408" bottom="#fff" bottomLine="#666" /></ToolButton>
            <ToolButton wide label="Hierarhija navzdol"><HierarchyIcon top="#ffd13a" topLine="#ee8400" bottom="#5fae34" bottomLine="#38851a" /></ToolButton>
            <button type="button" className="ml-2">Zapisnik statusa</button>
            <button type="button" className="ml-4">Klasifikacija</button>
          </div>
        </header>

        <div className="pt-2 pr-1 pb-[27px] pl-[3px]">
          <DocumentForm />

          <div role="tablist" className="mt-[10px] flex pl-3">
            {tabs.map((t) => (
              <Tab key={t.label} {...t} />
            ))}
          </div>
          <div className="h-[3px] border-y border-[#6289b3] bg-[#8cb1da]" />

          <div className="border border-t-0 border-[#94aeca] bg-[#deeaf3] pt-5 pr-[7px] pb-[15px] pl-[6px]">
            <div className="flex">
              <Originals />
              <div className="flex w-[5px] shrink-0 items-center justify-center">
                <svg width="3" height="18" viewBox="0 0 3 18" aria-hidden="true"><path d="M1.500 0v18" stroke="#8d99a6" strokeWidth="2" strokeDasharray="2 2" /></svg>
              </div>
              <div className="flex min-w-0 flex-1 flex-col">
                <div className="flex h-6 items-center pt-px pb-[2px]">
                  <MenuButton width="w-[76px]">Viewer</MenuButton>
                  <Bar />
                  <span className="w-px" />
                  <MenuButton width="w-[94px]">Navigation</MenuButton>
                  <Bar />
                  <span className="w-px" />
                  <MenuButton width="w-[67px]">Tools</MenuButton>
                  <Bar />
                  <span className="flex gap-[3px] pl-px">
                    <button type="button" aria-label="Uporabnik" className={`flex h-5 w-6 items-center justify-center ${raised}`}><UserListIcon /></button>
                    <button type="button" aria-label="Pomoč pregledovalnika" className={`flex h-5 w-6 items-center justify-center ${raised}`}><HelpBookIcon /></button>
                  </span>
                  <Bar />
                </div>
                <div className="flex flex-1 justify-center overflow-hidden border-t-2 border-r border-b border-l-2 border-t-[#6e7073] border-r-white border-b-white border-l-[#6e7073] bg-[#e7eff7]">
                  <Drawing />
                </div>
              </div>
            </div>

            <div className="mt-6 flex">
              <div className="flex w-[77px] gap-px">
                <SquareButton label="Prikaži"><GlassesIcon /></SquareButton>
                <SquareButton label="Spremeni" disabled><PencilIcon faded /></SquareButton>
                <SquareButton label="Natisni original"><BluePrintIcon /></SquareButton>
              </div>
              <div className="flex w-[119px] gap-px">
                <SquareButton label="Nov original" disabled><PageIcon faded /></SquareButton>
                <SquareButton label="Odpri" disabled wide><FolderIcon /></SquareButton>
                <SquareButton label="Zamenjaj" disabled><SwapIcon /></SquareButton>
                <SquareButton label="Prijavi" disabled><CheckInIcon /></SquareButton>
                <SquareButton label="Podrobnosti"><DetailIcon /></SquareButton>
              </div>
              <div className="flex w-14">
                <SquareButton label="Izbriši" disabled><TrashIcon /></SquareButton>
              </div>
              <div className="flex gap-px">
                <SquareButton label="Razporedi"><DownSquaresIcon /></SquareButton>
                <SquareButton label="Okno"><WindowIcon /></SquareButton>
                <SquareButton label="Zapri pregled"><CloseBoxIcon /></SquareButton>
              </div>
            </div>
          </div>
        </div>
      </main>
    </div>
  );
}
